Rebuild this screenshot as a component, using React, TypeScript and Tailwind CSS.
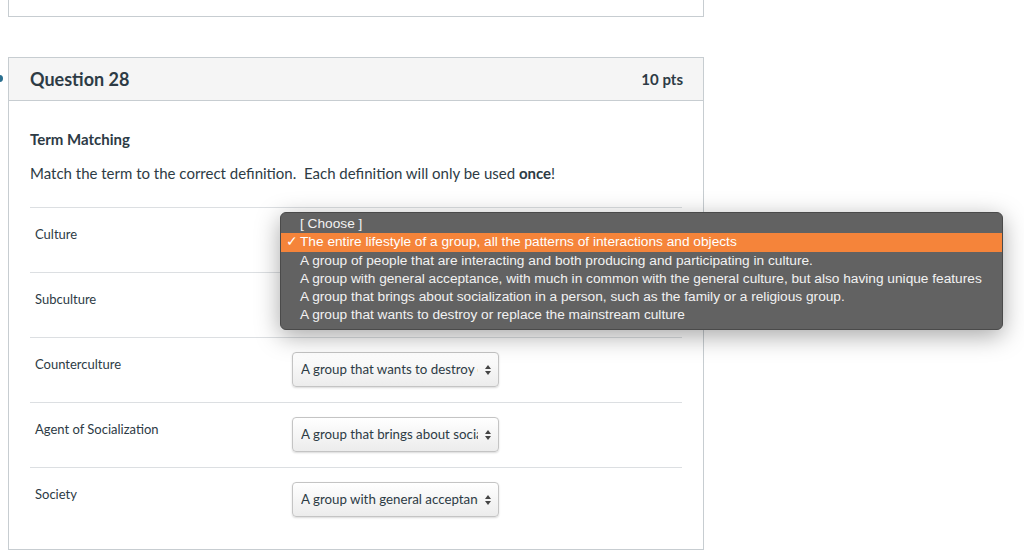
import React from 'react';

const options = [
  'The entire lifestyle of a group, all the patterns of interactions and objects',
  'A group of people that are interacting and both producing and participating in culture.',
  'A group with general acceptance, with much in common with the general culture, but also having unique features',
  'A group that brings about socialization in a person, such as the family or a religious group.',
  'A group that wants to destroy or replace the mainstream culture',
];

const rows = [
  { term: 'Culture', value: options[0] },
  { term: 'Subculture', value: options[1] },
  { term: 'Counterculture', value: options[4] },
  { term: 'Agent of Socialization', value: options[3] },
  { term: 'Society', value: options[2] },
];

function SelectBox({ value }: { value: string }) {
  return (
    <div className="flex h-[35px] w-[207px] items-center rounded-[4px] border border-[#c4c4c4] bg-gradient-to-b from-white to-[#ececec] pl-[8px] pr-[6px] shadow-[0_1px_2px_rgba(0,0,0,0.15)]">
      <span className="w-[177px] overflow-hidden whitespace-nowrap text-[13.3px] text-[#2d3b45]">{value}</span>
      <svg width="8" height="12" viewBox="0 0 8 12" className="ml-auto">
        <path d="M4 1 L7 5 L1 5 Z" fill="#444" />
        <path d="M4 11 L7 7 L1 7 Z" fill="#444" />
      </svg>
    </div>
  );
}

function OptionMenu() {
  return (
    <div className="absolute left-[-12px] top-[4px] z-10 w-[723px] rounded-[6px] border border-[#4a4a4a] bg-[#626262] pb-[4px] pt-[2px] font-['Liberation_Sans',Arial,sans-serif] text-[13.7px] leading-[18.3px] text-[#f2f2f2] shadow-[0_6px_24px_rgba(0,0,0,0.35)]">
      <div className="pl-[19px]">[ Choose ]</div>
      {options.map((opt, i) => (
        <div key={opt} className={`relative pl-[19px] ${i === 0 ? 'bg-[#f5843a] text-white' : ''}`}>
          {i === 0 && <span className="absolute left-[5px] top-0">✓</span>}
          {opt}
        </div>
      ))}
    </div>
  );
}

export default function App() {
  return (
    <div className="relative min-h-[559px] bg-white font-['Lato','Noto_Sans',sans-serif] text-[#2d3b45]">
      <div className="absolute left-[-4px] top-[75px] h-[7px] w-[7px] rounded-full bg-[#2a6f8f]" />

      <div className="ml-[8px] h-[17px] w-[696px] border-x border-b border-[#c7cdd1]" />

      <div className="ml-[8px] mt-[40px] w-[696px] border border-[#c7cdd1]">
        <div className="flex h-[43px] items-center justify-between border-b border-[#c7cdd1] bg-[#f5f5f5] pl-[21px] pr-[20px]">
          <span className="text-[18px] font-bold">Question 28</span>
          <span className="text-[15px] font-bold">10 pts</span>
        </div>

        <div className="px-[21px] pb-[17px] pt-[27px]">
          <p className="text-[15px] font-bold leading-[22px]">Term Matching</p>
          <p className="mt-[12px] text-[15px] leading-[22px]">
            Match the term to the correct definition.&nbsp; Each definition will only be used <span className="font-bold">once</span>!
          </p>

          <div className="mt-[23px]">
            {rows.map((row, i) => (
              <div key={row.term} className="grid h-[65px] grid-cols-[262px_1fr] border-t border-[#dcdfe2]">
                <div className="pl-[5px] pt-[17px] text-[13px] leading-[18px]">{row.term}</div>
                <div className="relative pt-[14px]">
                  {i === 0 && <OptionMenu />}
                  {i > 1 && <SelectBox value={row.value} />}
                </div>
              </div>
            ))}
          </div>
        </div>
      </div>
    </div>
  );
}
